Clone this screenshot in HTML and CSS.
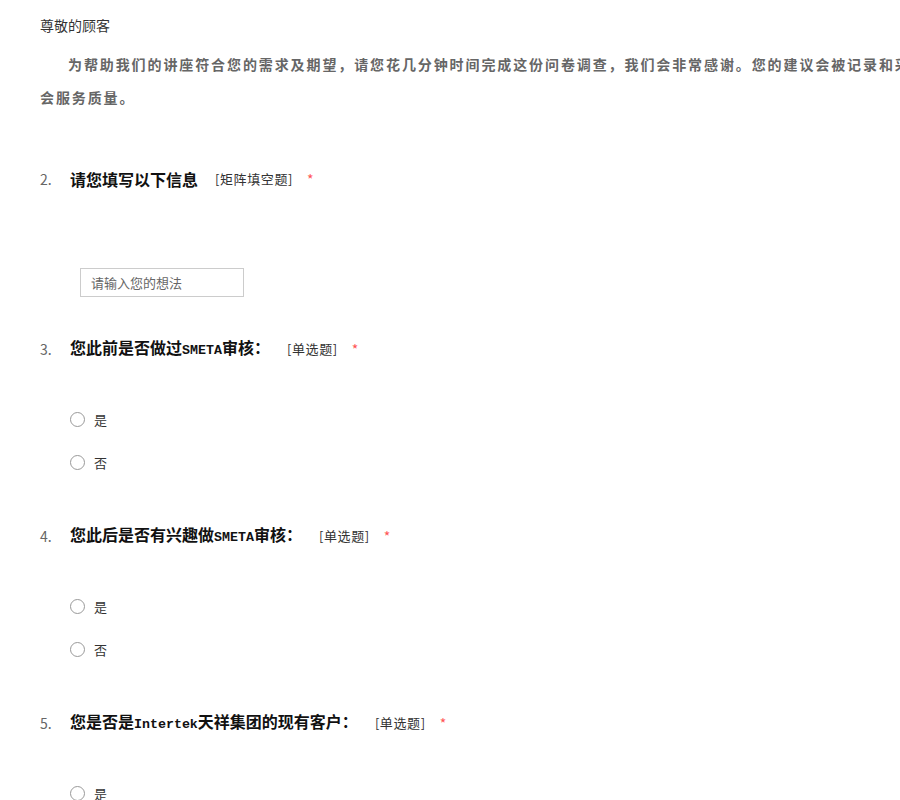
FILE: index.html
```html
<!DOCTYPE html>
<html lang="zh">
<head>
<meta charset="utf-8">
<title>问卷调查</title>
<link rel="stylesheet" href="styles.css">
</head>
<body>
<div class="page">
  <div class="greet">尊敬的顾客</div>
  <p class="intro">为帮助我们的讲座符合您的需求及期望，请您花几分钟时间完成这份问卷调查，我们会非常感谢。您的建议会被记录和采纳，改善讲座会服务质量。</p>

  <div class="q q2">
    <div class="q-title">
      <span class="num">2.</span>
      <span class="title sans">请您填写以下信息</span>
      <span class="tag">[矩阵填空题]</span>
      <span class="star">*</span>
    </div>
    <div class="input-wrap"><input class="text-input" type="text" placeholder="请输入您的想法"></div>
  </div>

  <div class="q">
    <div class="q-title">
      <span class="num">3.</span>
      <span class="title">您此前是否做过<span class="lat">SMETA</span>审核：</span>
      <span class="tag">[单选题]</span>
      <span class="star">*</span>
    </div>
    <div class="options">
      <label class="opt"><span class="radio"></span><span>是</span></label>
      <label class="opt"><span class="radio"></span><span>否</span></label>
    </div>
  </div>

  <div class="q">
    <div class="q-title">
      <span class="num">4.</span>
      <span class="title">您此后是否有兴趣做<span class="lat">SMETA</span>审核：</span>
      <span class="tag">[单选题]</span>
      <span class="star">*</span>
    </div>
    <div class="options">
      <label class="opt"><span class="radio"></span><span>是</span></label>
      <label class="opt"><span class="radio"></span><span>否</span></label>
    </div>
  </div>

  <div class="q">
    <div class="q-title">
      <span class="num">5.</span>
      <span class="title">您是否是<span class="lat">Intertek</span>天祥集团的现有客户：</span>
      <span class="tag">[单选题]</span>
      <span class="star">*</span>
    </div>
    <div class="options">
      <label class="opt"><span class="radio"></span><span>是</span></label>
      <label class="opt"><span class="radio"></span><span>否</span></label>
    </div>
  </div>
</div>
</body>
</html>
```

FILE: styles.css
```css
html, body {
  margin: 0;
  padding: 0;
  background: #fff;
  overflow: hidden;
}
body {
  font-family: "Noto Sans CJK SC", "Noto Sans", sans-serif;
  color: #333;
}
.page {
  padding: 10px 0 0 40px;
  width: 1000px;
}
.greet {
  font-size: 14px;
  line-height: 30px;
  color: #333;
}
.intro {
  margin: 8px 0 0 0;
  width: 975px;
  font-size: 14px;
  line-height: 33px;
  font-weight: bold;
  color: #666;
  text-indent: 28px;
  letter-spacing: 1.9px;
}
.q {
  margin-top: 50px;
}
.q2 {
  margin-top: 53px;
}
.q-title {
  display: flex;
  align-items: center;
  height: 24px;
  line-height: 24px;
}
.num {
  width: 30px;
  font-size: 14px;
  color: #666;
}
.title {
  font-size: 16px;
  font-weight: bold;
  color: #111;
}
.lat {
  font-family: "Liberation Mono", monospace;
  font-size: 13.3px;
}
.tag {
  margin-left: 17px;
  font-size: 13px;
  color: #333;
  letter-spacing: 0.6px;
}
.star {
  margin-left: 14px;
  font-size: 14px;
  color: #f55;
}
.input-wrap {
  margin: 77px 0 0 40px;
}
.text-input {
  display: block;
  box-sizing: border-box;
  width: 164px;
  height: 29px;
  border: 1px solid #ccc;
  padding: 0 10px;
  font-family: "Noto Sans CJK SC", sans-serif;
  font-size: 13px;
  color: #333;
  outline: none;
}
.text-input::placeholder {
  color: #666;
}
.q2 + .q {
  margin-top: 40px;
}
.options {
  margin: 46px 0 0 30px;
  display: flex;
  flex-direction: column;
  gap: 19px;
}
.opt {
  display: flex;
  align-items: center;
  gap: 9px;
  height: 24px;
  font-size: 13px;
  color: #333;
}
.radio {
  box-sizing: border-box;
  width: 15px;
  height: 15px;
  border: 1px solid #999;
  border-radius: 50%;
  background: #fff;
}
```
